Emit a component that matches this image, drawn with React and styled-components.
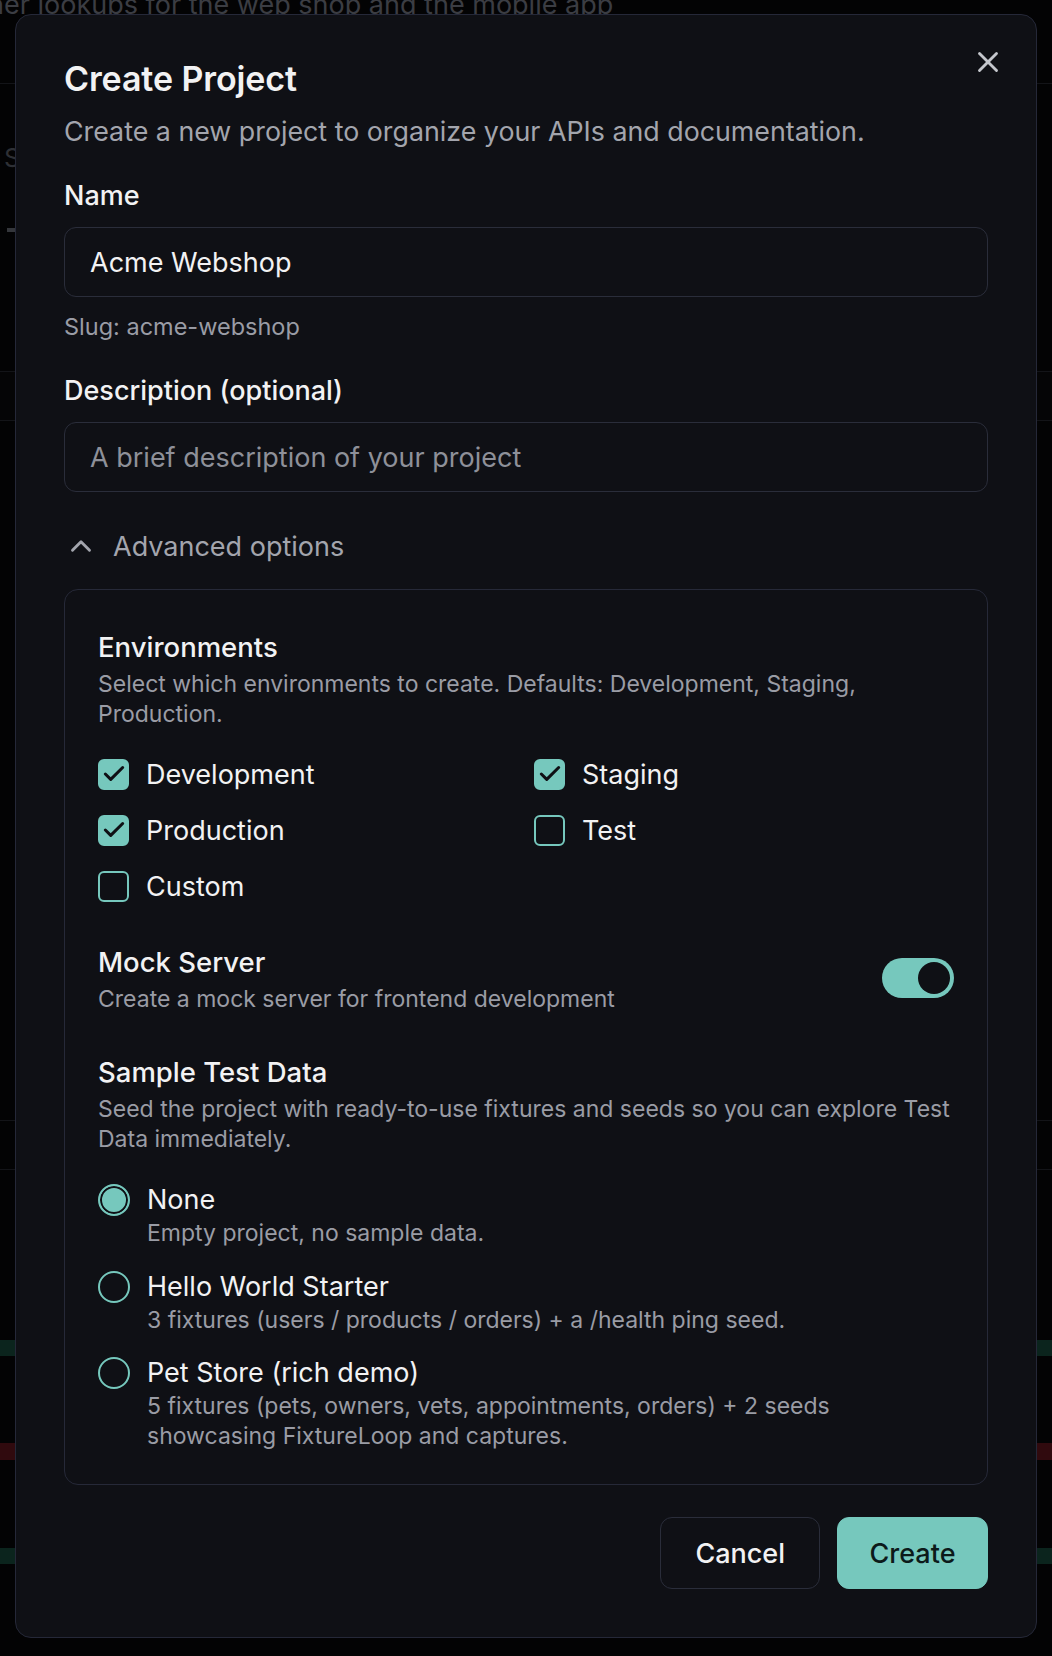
import React from 'react';
import styled, { createGlobalStyle } from 'styled-components';
import { X, ChevronUp } from 'lucide-react';

const Global = createGlobalStyle`
  html, body { margin: 0; padding: 0; background: #030304; }
  body { font-family: Inter, "Noto Sans", sans-serif; -webkit-font-smoothing: antialiased; }
  * { box-sizing: border-box; }
`;

const TEAL = '#76c8bd';
const MUTED = '#a3a5ad';
const DIM = '#9a9ca5';

const Screen = styled.div`
  position: relative;
  width: 1052px;
  height: 1656px;
  overflow: hidden;
  background: #030304;
`;

const Backdrop = styled.div`
  display: flex;
  flex-direction: column;
  width: 100%;
`;

const BackText = styled.p`
  margin: -11px 0 0 -37px;
  height: 29px;
  font-size: 27px;
  line-height: 32px;
  color: #3b3d43;
  white-space: nowrap;
`;

const Band = styled.div`
  height: ${p => p.$h}px;
  background: ${p => p.$bg || 'transparent'};
  border-bottom: ${p => (p.$line ? '1px solid #131418' : 'none')};
  display: flex;
  align-items: center;
  padding-left: ${p => p.$pl || 0}px;
  color: #2e3035;
  font-size: 26px;
`;

const Dash = styled.span`
  width: 8px;
  height: 4px;
  background: #34363b;
`;

const Dialog = styled.div`
  position: absolute;
  left: 15px;
  top: 14px;
  width: 1022px;
  background: #0f1015;
  border: 1px solid #252838;
  border-radius: 16px;
  padding: 46px 48px 48px;
  display: flex;
  flex-direction: column;
  color: #f2f2f3;
`;

const CloseButton = styled.button`
  position: absolute;
  top: 30px;
  right: 31px;
  width: 34px;
  height: 34px;
  padding: 0;
  border: none;
  background: none;
  color: #c4c6cc;
  display: flex;
  align-items: center;
  justify-content: center;
`;

const Title = styled.h2`
  margin: 0;
  font-size: 34px;
  line-height: 36px;
  font-weight: 600;
  letter-spacing: -0.1px;
`;

const Subtitle = styled.p`
  margin: 17px 0 0;
  font-size: 26.8px;
  line-height: 34px;
  color: ${MUTED};
`;

const FieldLabel = styled.label`
  display: block;
  margin-top: ${p => p.$mt || 31}px;
  font-size: 27px;
  line-height: 34px;
  font-weight: 500;
`;

const Input = styled.input`
  margin-top: 14px;
  width: 100%;
  height: 70px;
  border: 1px solid #2a2d3a;
  border-radius: 12px;
  background: transparent;
  padding: 0 25px;
  font-family: inherit;
  font-size: 27px;
  color: #f2f2f3;
  outline: none;
  &::placeholder { color: #8e9099; }
`;

const Hint = styled.p`
  margin: 15px 0 0;
  font-size: 23.5px;
  line-height: 30px;
  color: ${DIM};
`;

const Disclosure = styled.button`
  margin-top: 37px;
  height: 34px;
  padding: 0;
  border: none;
  background: none;
  display: flex;
  align-items: center;
  gap: 15px;
  font-family: inherit;
  font-size: 27px;
  color: ${MUTED};
  align-self: flex-start;
`;

const Panel = styled.div`
  margin-top: 26px;
  border: 1px solid #262938;
  border-radius: 14px;
  padding: 40px 33px 33px;
  display: flex;
  flex-direction: column;
`;

const Section = styled.div`
  margin-top: ${p => p.$mt || 0}px;
`;

const SectionTitle = styled.h3`
  margin: 0;
  font-size: 27.5px;
  line-height: 34px;
  font-weight: 500;
`;

const SectionDesc = styled.p`
  margin: 5px 0 0;
  font-size: 23px;
  line-height: 30px;
  color: ${DIM};
`;

const CheckGrid = styled.div`
  margin-top: 25px;
  display: grid;
  grid-template-columns: 1fr 1fr;
  column-gap: 16px;
  row-gap: 16px;
`;

const CheckItem = styled.label`
  height: 40px;
  display: flex;
  align-items: center;
  gap: 17px;
  font-size: 27px;
  color: #f2f2f3;
`;

const Box = styled.span`
  width: 31px;
  height: 31px;
  border-radius: 6px;
  border: 2px solid ${TEAL};
  background: ${p => (p.$on ? TEAL : 'transparent')};
  display: flex;
  align-items: center;
  justify-content: center;
  flex-shrink: 0;
`;

const ToggleRow = styled.div`
  margin-top: 39px;
  display: flex;
  align-items: center;
  justify-content: space-between;
`;

const Track = styled.span`
  width: 72px;
  height: 40px;
  margin-top: -4px;
  border-radius: 20px;
  background: ${TEAL};
  padding: 4px;
  display: flex;
  justify-content: ${p => (p.$on ? 'flex-end' : 'flex-start')};
  flex-shrink: 0;
`;

const Thumb = styled.span`
  width: 32px;
  height: 32px;
  border-radius: 50%;
  background: #0f1015;
`;

const RadioList = styled.div`
  margin-top: 29px;
  display: flex;
  flex-direction: column;
  gap: 21.5px;
`;

const RadioItem = styled.label`
  display: flex;
  gap: 17px;
  align-items: flex-start;
`;

const Circle = styled.span`
  margin-top: 1px;
  width: 32px;
  height: 32px;
  border-radius: 50%;
  border: 2px solid ${TEAL};
  background: ${p => (p.$on ? TEAL : 'transparent')};
  box-shadow: ${p => (p.$on ? 'inset 0 0 0 2px #0f1015' : 'none')};
  flex-shrink: 0;
`;

const RadioText = styled.div`
  display: flex;
  flex-direction: column;
  gap: 1px;
`;

const RadioLabel = styled.span`
  font-size: 27px;
  line-height: 34px;
  color: #f2f2f3;
`;

const RadioDesc = styled.span`
  font-size: 23px;
  line-height: 30px;
  color: ${DIM};
`;

const Footer = styled.div`
  margin-top: 32px;
  display: flex;
  justify-content: flex-end;
  gap: 17px;
`;

const Button = styled.button`
  height: 72px;
  padding: 0 ${p => (p.$primary ? 31.5 : 34)}px;
  border-radius: 12px;
  font-family: inherit;
  font-size: 27px;
  font-weight: 500;
  border: 1px solid ${p => (p.$primary ? TEAL : '#2a2d3a')};
  background: ${p => (p.$primary ? TEAL : 'transparent')};
  color: ${p => (p.$primary ? '#0c1a1a' : '#f2f2f3')};
`;

const CheckMark = () => (
  <svg width="26" height="26" viewBox="0 0 24 24" fill="none" stroke="#0f1015" strokeWidth="2.8" strokeLinecap="round" strokeLinejoin="round">
    <path d="M20 6 9 17l-5-5" />
  </svg>
);

const envs = [
  { name: 'Development', on: true },
  { name: 'Staging', on: true },
  { name: 'Production', on: true },
  { name: 'Test', on: false },
  { name: 'Custom', on: false },
];

const samples = [
  { name: 'None', desc: 'Empty project, no sample data.', on: true },
  { name: 'Hello World Starter', desc: '3 fixtures (users / products / orders) + a /health ping seed.' },
  { name: 'Pet Store (rich demo)', desc: '5 fixtures (pets, owners, vets, appointments, orders) + 2 seeds showcasing FixtureLoop and captures.' },
];

const bands = [
  { h: 66, line: true },
  { h: 60 },
  { h: 26, pl: 4, text: 'S' },
  { h: 55 },
  { h: 10, pl: 7, dash: true },
  { h: 137, line: true },
  { h: 49, line: true, bg: '#050506' },
  { h: 700, line: true },
  { h: 49, line: true },
  { h: 170 },
  { h: 16, bg: '#0b241d' },
  { h: 87 },
  { h: 17, bg: '#300a0e' },
  { h: 88 },
  { h: 16, bg: '#0b241d' },
];

export default function App() {
  return (
    <Screen>
      <Global />
      <Backdrop>
        <BackText>other lookups for the web shop and the mobile app</BackText>
        {bands.map((b, i) => (
          <Band key={i} $h={b.h} $bg={b.bg} $line={b.line} $pl={b.pl}>
            {b.text}
            {b.dash && <Dash />}
          </Band>
        ))}
      </Backdrop>

      <Dialog>
        <CloseButton aria-label="Close">
          <X size={34} strokeWidth={2} />
        </CloseButton>
        <Title>Create Project</Title>
        <Subtitle>Create a new project to organize your APIs and documentation.</Subtitle>

        <FieldLabel>Name</FieldLabel>
        <Input defaultValue="Acme Webshop" />
        <Hint>Slug: acme-webshop</Hint>

        <FieldLabel $mt={32}>Description (optional)</FieldLabel>
        <Input placeholder="A brief description of your project" />

        <Disclosure>
          <ChevronUp size={34} strokeWidth={2} />
          Advanced options
        </Disclosure>

        <Panel>
          <Section>
            <SectionTitle>Environments</SectionTitle>
            <SectionDesc>Select which environments to create. Defaults: Development, Staging, Production.</SectionDesc>
            <CheckGrid>
              {envs.map(e => (
                <CheckItem key={e.name}>
                  <Box $on={e.on}>{e.on && <CheckMark />}</Box>
                  {e.name}
                </CheckItem>
              ))}
            </CheckGrid>
          </Section>

          <ToggleRow>
            <div>
              <SectionTitle>Mock Server</SectionTitle>
              <SectionDesc>Create a mock server for frontend development</SectionDesc>
            </div>
            <Track $on>
              <Thumb />
            </Track>
          </ToggleRow>

          <Section $mt={41}>
            <SectionTitle>Sample Test Data</SectionTitle>
            <SectionDesc>Seed the project with ready-to-use fixtures and seeds so you can explore Test Data immediately.</SectionDesc>
            <RadioList>
              {samples.map(s => (
                <RadioItem key={s.name}>
                  <Circle $on={s.on} />
                  <RadioText>
                    <RadioLabel>{s.name}</RadioLabel>
                    <RadioDesc>{s.desc}</RadioDesc>
                  </RadioText>
                </RadioItem>
              ))}
            </RadioList>
          </Section>
        </Panel>

        <Footer>
          <Button>Cancel</Button>
          <Button $primary>Create</Button>
        </Footer>
      </Dialog>
    </Screen>
  );
}
